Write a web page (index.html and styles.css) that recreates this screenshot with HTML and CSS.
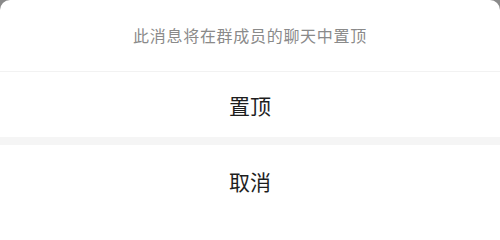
FILE: index.html
```html
<!DOCTYPE html>
<html lang="zh-CN">
<head>
<meta charset="utf-8">
<link rel="stylesheet" href="styles.css">
</head>
<body>
<div class="sheet">
  <div class="title">此消息将在群成员的聊天中置顶</div>
  <div class="action">置顶</div>
  <div class="gap"></div>
  <div class="action cancel">取消</div>
</div>
</body>
</html>
```
FILE: styles.css
```css
html {
  margin: 0;
  padding: 0;
  background: #fff;
}
body {
  margin: 0;
  padding: 0;
  width: 500px;
  height: 216px;
  background: #8a8a8a;
  overflow: hidden;
}
.sheet {
  width: 500px;
  height: 216px;
  background: #fff;
  border-radius: 10px 10px 0 0;
  display: flex;
  flex-direction: column;
  font-family: "Noto Sans CJK SC", "Noto Sans", sans-serif;
}
.title {
  height: 69px;
  padding-bottom: 2px;
  display: flex;
  align-items: center;
  justify-content: center;
  font-size: 16px;
  letter-spacing: 0.7px;
  color: #8a8a8a;
  border-bottom: 1px solid #f2f2f2;
}
.action {
  height: 65px;
  display: flex;
  align-items: center;
  justify-content: center;
  font-size: 21px;
  color: #1e1e1e;
}
.gap {
  height: 8px;
  background: #f5f5f5;
}
.cancel {
  height: 71px;
}
```
